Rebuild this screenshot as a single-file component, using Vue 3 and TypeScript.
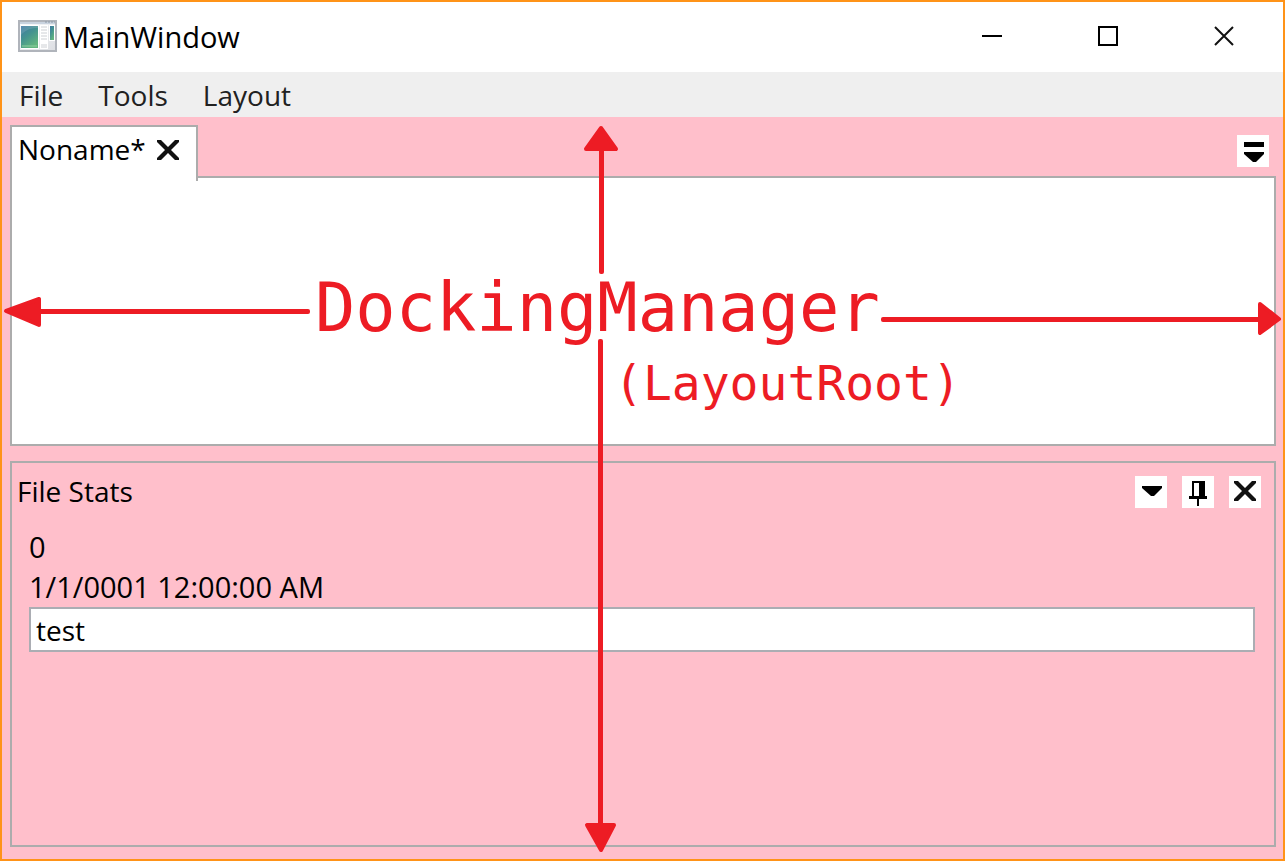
<script setup lang="ts">
import { ref } from 'vue'

const menus: string[] = ['File', 'Tools', 'Layout']
const note = ref<string>('test')
</script>

<template>
  <div class="window">
    <header class="titlebar">
      <svg class="app-icon" width="40" height="34" viewBox="0 0 40 34" aria-hidden="true">
        <defs>
          <linearGradient id="paneFill" x1="0" y1="0" x2="0.6" y2="1">
            <stop offset="0" stop-color="#3f78a4" />
            <stop offset="0.5" stop-color="#44938f" />
            <stop offset="1" stop-color="#62b57e" />
          </linearGradient>
          <linearGradient id="frameFill" x1="0" y1="0" x2="1" y2="1">
            <stop offset="0" stop-color="#fafbfd" />
            <stop offset="1" stop-color="#dcdee2" />
          </linearGradient>
        </defs>
        <rect x="1" y="1" width="37" height="30" fill="url(#frameFill)" stroke="#b0b4bb" stroke-width="2" />
        <rect x="2" y="2" width="35" height="2" fill="#c9d3df" />
        <path d="M27 2h10" stroke="#8d9aa8" stroke-dasharray="2 1" />
        <rect x="3" y="5" width="18" height="24" fill="#fff" />
        <rect x="3" y="6" width="17" height="22" fill="url(#paneFill)" />
        <path d="M3 15C8 9 14 8 20 8V6H3z" fill="#fff" opacity="0.13" />
        <path d="M4 26h15" stroke="#8fd0a0" />
        <rect x="22" y="5" width="8" height="24" fill="#fff" />
        <path d="M23 7h6M23 10h6M23 13h6M23 16h6M23 19h6M23 25h6M23 27h6" stroke="#cdd0d4" />
        <rect x="31" y="5" width="6" height="16" fill="#fff" />
        <rect x="32" y="6" width="4" height="14" fill="url(#paneFill)" />
      </svg>
      <h1 class="title">MainWindow</h1>
      <div class="caption-buttons">
        <button type="button" aria-label="Minimize">
          <svg width="22" height="22" viewBox="0 0 22 22"><path d="M1 11h20" stroke="#000" stroke-width="2" /></svg>
        </button>
        <button type="button" aria-label="Maximize">
          <svg width="22" height="22" viewBox="0 0 22 22"><rect x="2" y="2" width="18" height="18" fill="none" stroke="#000" stroke-width="2" /></svg>
        </button>
        <button type="button" aria-label="Close window">
          <svg width="22" height="22" viewBox="0 0 22 22"><path d="M2 2l18 18M20 2L2 20" stroke="#111" stroke-width="2" /></svg>
        </button>
      </div>
    </header>

    <nav class="menubar" aria-label="Main menu">
      <button v-for="menu in menus" :key="menu" type="button">{{ menu }}</button>
    </nav>

    <main class="docking">
      <section class="documents">
        <div class="tab-strip">
          <div class="tab">
            <span>Noname*</span>
            <button class="tab-close" type="button" aria-label="Close Noname">
              <svg width="24" height="24" viewBox="0 0 24 24"><path d="M1 3h4l7 7 7-7h4v2l-8 8 8 8v2h-4l-7-7-7 7H1v-2l8-8-8-8z" fill="#111" /></svg>
            </button>
          </div>
          <button class="tool-button" type="button" aria-label="Document list">
            <svg width="32" height="32" viewBox="0 0 32 32"><path d="M7 7h20v5H7zM7 17h20v2l-8 8h-3l-9-8z" fill="#000" /></svg>
          </button>
        </div>
        <div class="document-body"></div>
      </section>

      <section class="tool-pane">
        <div class="pane-header">
          <h2>File Stats</h2>
          <div class="pane-buttons">
            <button class="tool-button" type="button" aria-label="Pane options">
              <svg width="32" height="32" viewBox="0 0 32 32"><path d="M7 10h20v2l-8 8h-3l-9-8z" fill="#000" /></svg>
            </button>
            <button class="tool-button" type="button" aria-label="Auto hide">
              <svg width="32" height="32" viewBox="0 0 32 32">
                <path d="M10 5h13v15h2v3h-8v7h-2v-7H7v-3h3zM12 7v13h5V7z" fill="#000" fill-rule="evenodd" />
              </svg>
            </button>
            <button class="tool-button" type="button" aria-label="Close pane">
              <svg width="32" height="32" viewBox="0 0 32 32"><path d="M5 5h4l7 7 7-7h4v2l-8 8 8 8v2h-4l-7-7-7 7H5v-2l8-8-8-8z" fill="#111" /></svg>
            </button>
          </div>
        </div>
        <div class="pane-body">
          <p>0</p>
          <p>1/1/0001 12:00:00 AM</p>
          <input v-model="note" type="text" aria-label="Note" />
        </div>
      </section>
    </main>

    <svg class="callout" viewBox="0 0 1285 861">
      <g fill="#ed1c24">
        <rect x="599" y="140" width="5" height="134" rx="2" />
        <rect x="598" y="339" width="5" height="490" rx="2" />
        <rect x="36" y="309" width="274" height="5" rx="2" />
        <rect x="881" y="317" width="384" height="5" rx="2" />
      </g>
      <g fill="#ed1c24" stroke="#ed1c24" stroke-width="4" stroke-linejoin="round">
        <path d="M601 128L616 149H586z" />
        <path d="M601 850L587 825H614z" />
        <path d="M6 311L39 299V325z" />
        <path d="M1279 319L1260 333V304z" />
      </g>
      <text class="callout-main" x="315" y="331">DockingManager</text>
      <text class="callout-sub" x="614" y="400">(LayoutRoot)</text>
    </svg>
  </div>
</template>

<style>
body {
  margin: 0;
}
</style>

<style scoped>
.window {
  position: relative;
  box-sizing: border-box;
  display: flex;
  flex-direction: column;
  min-height: 100vh;
  border: 2px solid #ff9318;
  background: #fff;
  color: #000;
  font-family: 'Open Sans', 'Noto Sans', sans-serif;
  font-size: 28px;
  line-height: 40px;
}

button {
  padding: 0;
  border: 0;
  background: none;
  color: inherit;
  font: inherit;
}

svg {
  display: block;
}

h1,
h2,
p {
  margin: 0;
  font-size: inherit;
  font-weight: 400;
}

.titlebar {
  display: flex;
  align-items: center;
  gap: 5px;
  height: 70px;
  padding-left: 16px;
}

.title,
.pane-body p {
  font-size: 29px;
}

.caption-buttons {
  display: flex;
  align-self: stretch;
  margin-left: auto;
  padding-right: 1px;
}

.caption-buttons button {
  display: flex;
  align-items: center;
  justify-content: center;
  width: 116px;
  padding-bottom: 2px;
}

.menubar {
  display: flex;
  gap: 35px;
  height: 45px;
  padding: 0 17px;
  background: #efefef;
  color: #212121;
}

.docking {
  flex: 1;
  display: flex;
  flex-direction: column;
  gap: 15px;
  padding: 8px 7px 12px 8px;
  background: #ffbfcb;
}

.documents {
  flex: 321 1 0;
  display: flex;
  flex-direction: column;
}

.tab-strip {
  display: flex;
  align-items: flex-start;
  justify-content: space-between;
  height: 51px;
  padding-right: 7px;
}

.tab {
  position: relative;
  z-index: 1;
  box-sizing: border-box;
  display: flex;
  align-items: center;
  gap: 10px;
  height: 56px;
  padding: 0 16px 10px 6px;
  border: 2px solid #acacac;
  border-bottom: 0;
  background: #fff;
}

.tab-strip .tool-button {
  margin-top: 10px;
}

.document-body {
  flex: 1;
  border: 2px solid #acacac;
  background: #fff;
}

.tool-button {
  width: 32px;
  height: 32px;
  background: #fff;
}

.tool-pane {
  flex: 382 1 0;
  box-sizing: border-box;
  border: 2px solid #acacac;
}

.pane-header {
  display: flex;
  align-items: center;
  justify-content: space-between;
  height: 56px;
  padding: 0 13px 0 5px;
}

.pane-buttons {
  display: flex;
  gap: 15px;
  padding-top: 2px;
}

.pane-body {
  padding: 8px 19px 0 17px;
}

.pane-body input {
  display: block;
  box-sizing: border-box;
  width: 100%;
  height: 45px;
  padding: 0 5px;
  border: 2px solid #abadb3;
  border-radius: 0;
  background: #fff;
  color: inherit;
  font: inherit;
  outline: none;
}

.callout {
  position: absolute;
  inset: -2px;
  width: calc(100% + 4px);
  height: calc(100% + 4px);
  pointer-events: none;
}

.callout text {
  fill: #ed1c24;
  font-family: 'DejaVu Sans Mono', monospace;
}

.callout-main {
  font-size: 67px;
}

.callout-sub {
  font-size: 48px;
}
</style>
